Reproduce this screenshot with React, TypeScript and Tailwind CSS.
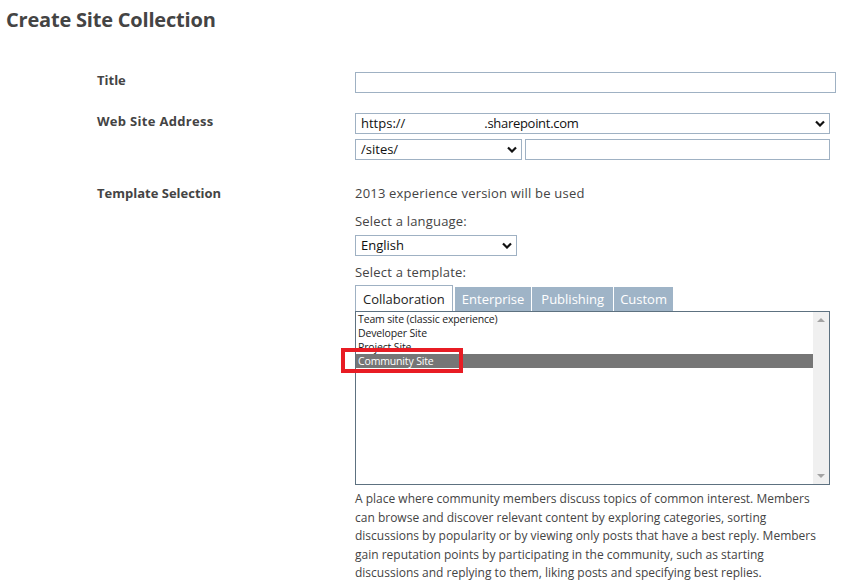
import React from "react";

const font = { fontFamily: '"Open Sans", "Noto Sans", sans-serif' };

function Chevron() {
  return (
    <svg width="10" height="7" viewBox="0 0 10 7" className="shrink-0">
      <polyline points="1,1.5 5,5.5 9,1.5" fill="none" stroke="#111" strokeWidth="2.2" />
    </svg>
  );
}

function SelectBox({ w, children }: { w: string; children: React.ReactNode }) {
  return (
    <div className={`${w} h-[21px] border border-[#9fb1c3] bg-white flex items-center justify-between pl-[5px] pr-[4px] text-[13px] text-[#111] leading-none`}>
      <span className="whitespace-pre flex">{children}</span>
      <Chevron />
    </div>
  );
}

export default function App() {
  const items = ["Team site (classic experience)", "Developer Site", "Project Site", "Community Site"];
  return (
    <div className="bg-white w-[863px] h-[581px] overflow-hidden text-[#444]" style={font}>
      <h1 className="pl-[6px] pt-[6px] text-[20px] leading-[28px] font-bold text-[#444] tracking-[-0.2px]">Create Site Collection</h1>

      <div className="pl-[97px] mt-[37px]">
        {/* Title row */}
        <div className="flex">
          <div className="w-[258px] text-[13px] font-bold leading-[18px]">Title</div>
          <div className="mt-[1px] w-[481px] h-[21px] border border-[#9fb1c3] bg-white" />
        </div>

        {/* Web site address */}
        <div className="flex mt-[19px]">
          <div className="w-[258px] text-[13px] font-bold leading-[18px] tracking-[0.3px]">Web Site Address</div>
          <div className="mt-[1px] flex flex-col gap-[5px]">
            <SelectBox w="w-[475px]">
              <span>https://</span>
              <span className="ml-[79px] tracking-[-0.3px]">.sharepoint.com</span>
            </SelectBox>
            <div className="flex gap-[3px]">
              <SelectBox w="w-[167px]">/sites/</SelectBox>
              <div className="w-[305px] h-[21px] border border-[#9fb1c3] bg-white" />
            </div>
          </div>
        </div>

        {/* Template selection */}
        <div className="flex mt-[24px]">
          <div className="w-[258px] text-[13px] font-bold leading-[18px]">Template Selection</div>
          <div className="w-[475px] text-[13px] leading-[18px] text-[#444]">
            <div className="tracking-[0.2px]">2013 experience version will be used</div>
            <div className="mt-[10px] tracking-[0.2px]">Select a language:</div>
            <div className="mt-[5px]">
              <SelectBox w="w-[162px]">English</SelectBox>
            </div>
            <div className="mt-[7px] tracking-[0.2px]">Select a template:</div>
            <div className="mt-[5px] flex items-end h-[25px]">
              <div className="h-[26px] px-[7px] border border-b-0 border-[#9fb1c3] bg-white text-[#222] flex items-center">Collaboration</div>
              <div className="ml-[2px] h-[24px] px-[7px] bg-[#9fb4c7] text-white flex items-center">Enterprise</div>
              <div className="ml-[1px] h-[24px] px-[9px] bg-[#9fb4c7] text-white flex items-center">Publishing</div>
              <div className="ml-[1px] h-[24px] px-[6px] bg-[#9fb4c7] text-white flex items-center">Custom</div>
            </div>
            <div className="relative w-[475px] h-[174px] border border-[#5d7180] bg-white flex">
              <div className="flex-1">
                {items.map((t, i) => (
                  <div
                    key={t}
                    className={`h-[14px] pl-[2px] text-[10.5px] leading-[14px] tracking-[-0.15px] ${i === 3 ? "bg-[#767676] text-white" : "text-[#222]"}`}
                  >
                    {t}
                  </div>
                ))}
              </div>
              <div className="w-[16px] bg-[#f0f0f0] flex flex-col items-center justify-between py-[6px]">
                <svg width="8" height="4" viewBox="0 0 8 4"><polygon points="0,4 8,4 4,0" fill="#a3a3a3" /></svg>
                <svg width="8" height="4" viewBox="0 0 8 4"><polygon points="0,0 8,0 4,4" fill="#a3a3a3" /></svg>
              </div>
              <div className="absolute left-[-15px] top-[36px] w-[122px] h-[25px] border-[4px] border-[#e81c24]" />
            </div>
            <p className="mt-[5px] text-[12px] leading-[18.6px] text-[#444] w-[470px]">
              A place where community members discuss topics of common interest. Members can browse and discover relevant content by exploring categories, sorting discussions by popularity or by viewing only posts that have a best reply. Members gain reputation points by participating in the community, such as starting discussions and replying to them, liking posts and specifying best replies.
            </p>
          </div>
        </div>
      </div>
    </div>
  );
}
